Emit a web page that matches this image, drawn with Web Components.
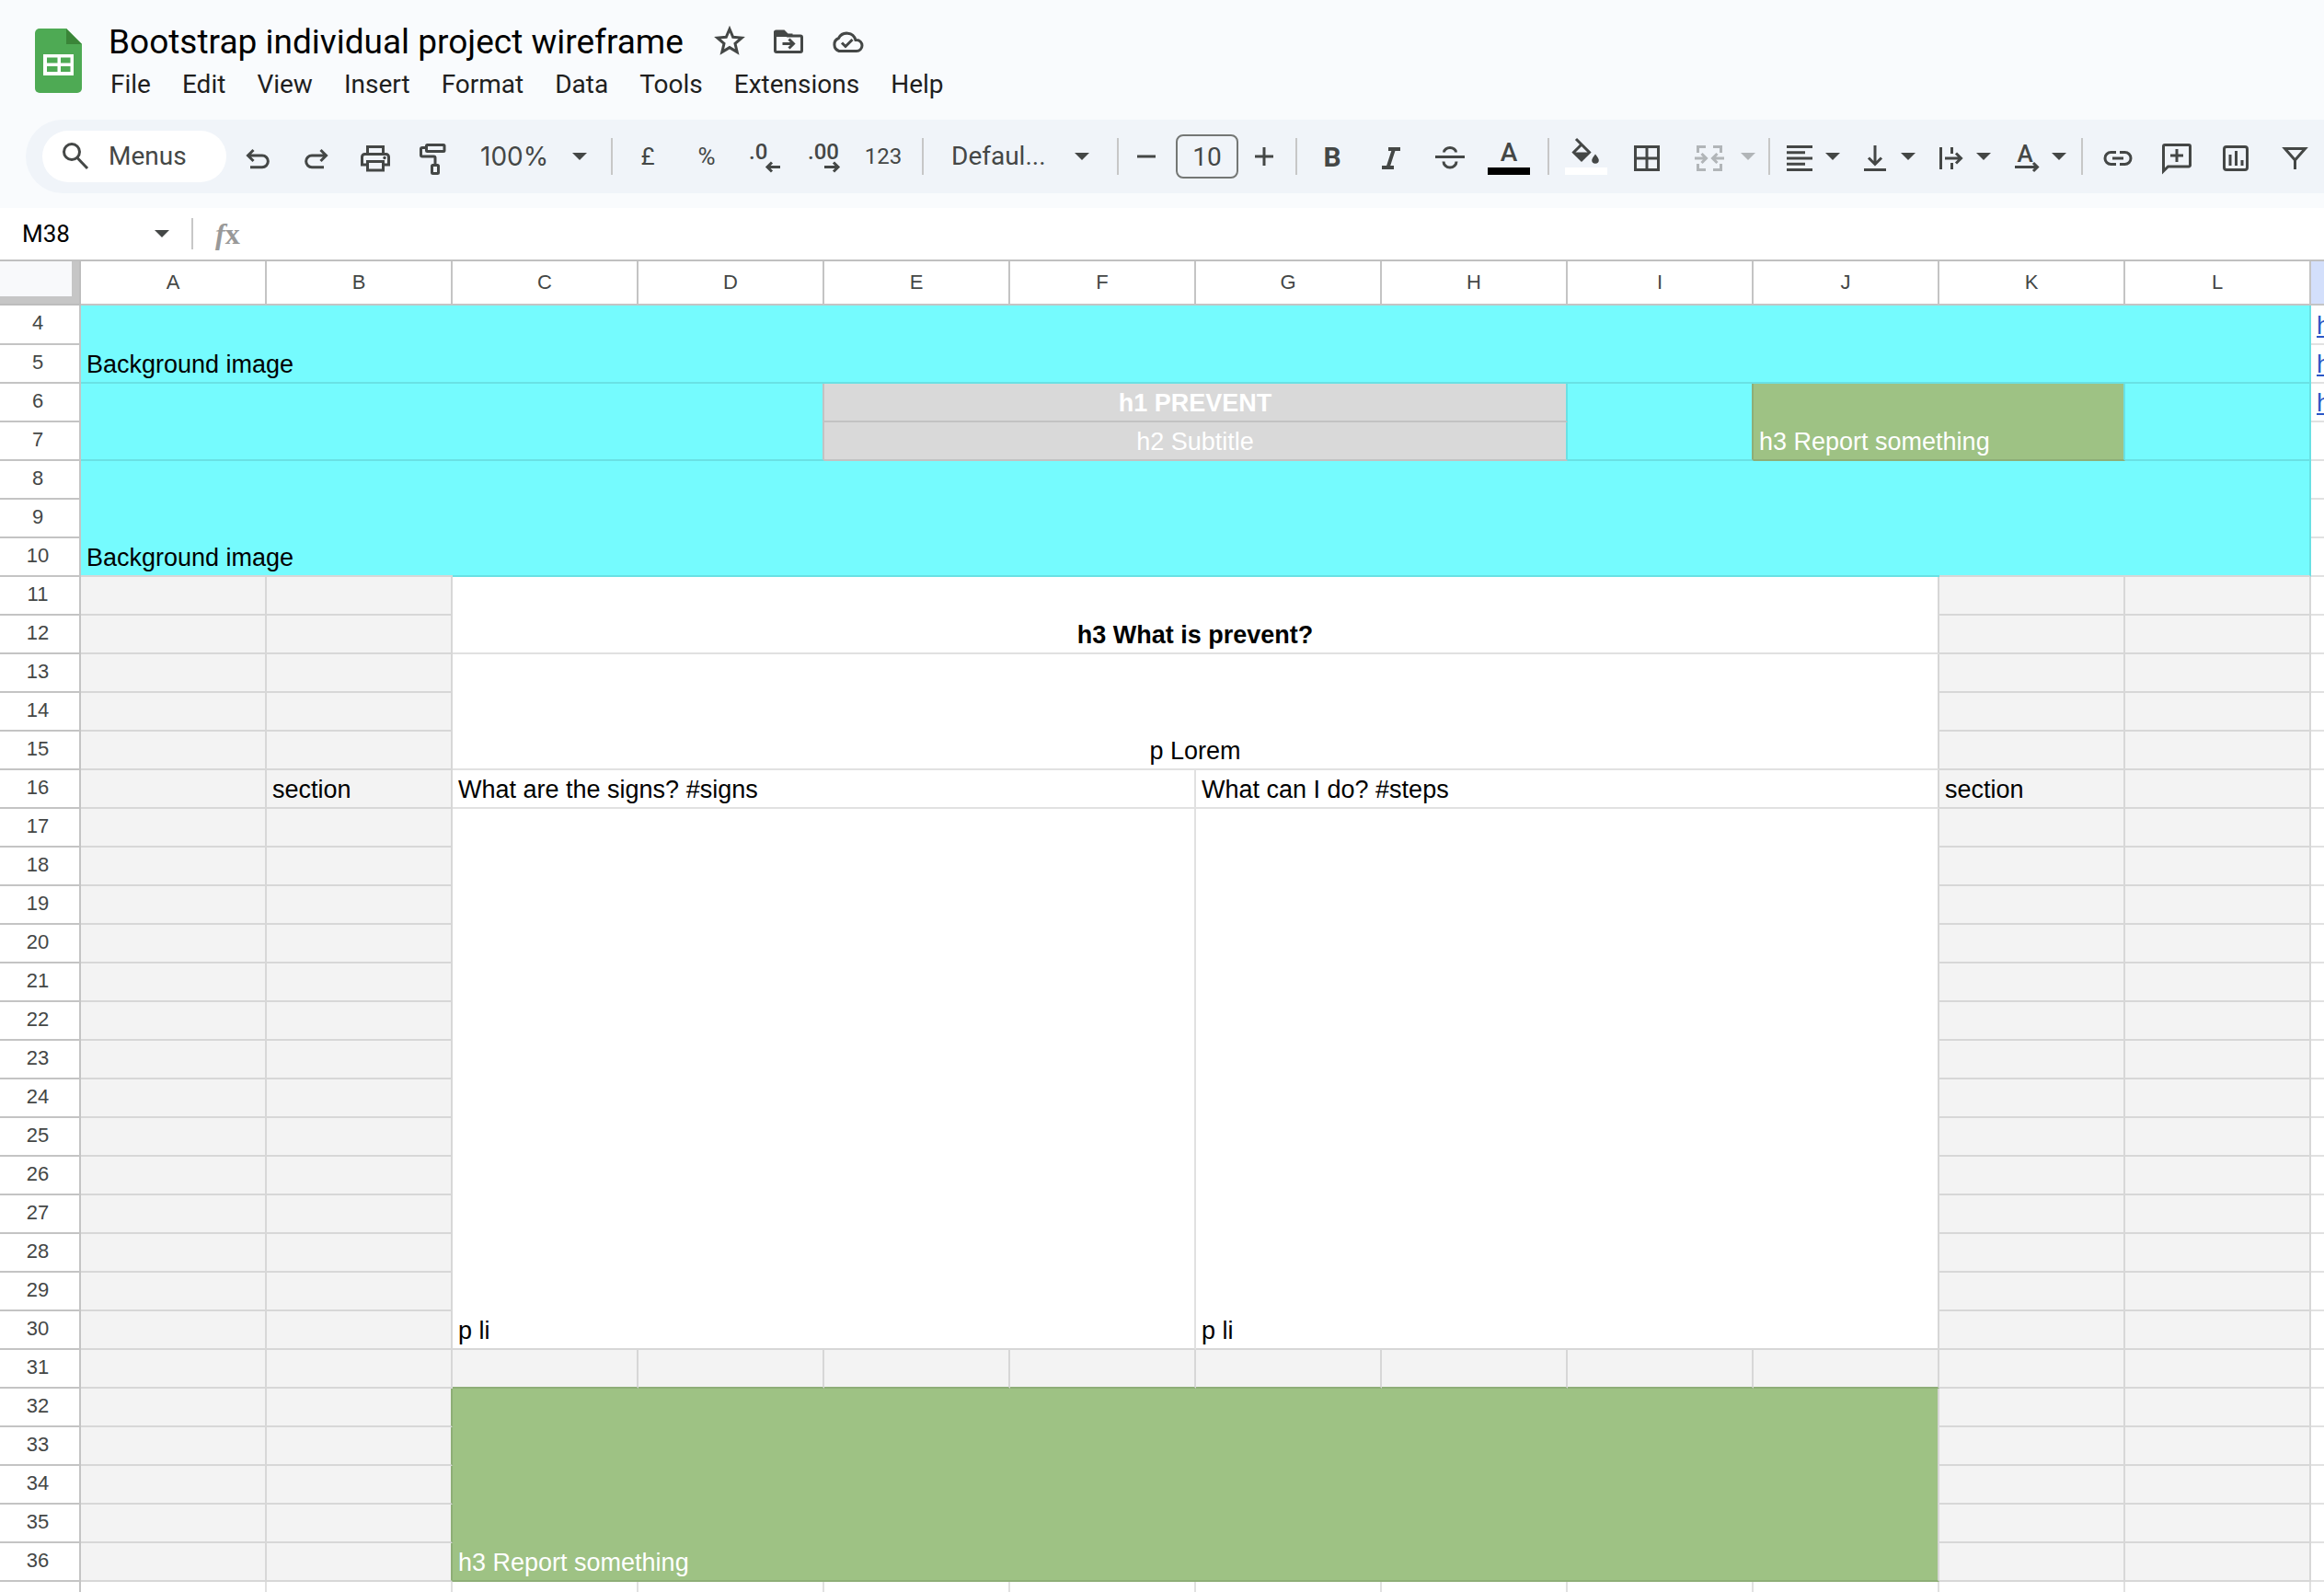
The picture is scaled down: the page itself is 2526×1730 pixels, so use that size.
<!DOCTYPE html>
<html lang="en">
<head>
<meta charset="utf-8">
<title>Bootstrap individual project wireframe</title>
<style>
  html, body { margin: 0; height: 100%; }
  body { font-family: Roboto, "Liberation Sans", sans-serif; color: #444746; background: #fff; overflow: hidden; }
</style>
</head>
<body>
<sheet-app></sheet-app>

<script>
const ICONS = {
  search: '<circle cx="16" cy="15" r="8.5"/><path d="M22 21.500L33 33"/>',
  undo: '<path d="M15.500 13L9.500 19l6 6M10 19h15a6.300 6.300 0 0 1 0 12.700H12"/>',
  redo: '<path d="M24.500 13l6 6-6 6M30 19H15a6.300 6.300 0 0 0 0 12.700h13"/>',
  print: '<path d="M11.500 17V9.500h17V17M11.500 29H5.500v-8.500a3 3 0 0 1 3-3h23a3 3 0 0 1 3 3V29h-6M11.500 25.500h17v9.500h-17z"/><circle cx="30" cy="21.500" r="1.700" class="f"/>',
  paint: '<rect x="11.500" y="7.500" width="19.500" height="7" rx="1"/><path d="M11 10.500H7a1.500 1.500 0 0 0-1.500 1.500v6.500A1.500 1.500 0 0 0 7 20h12.500a1.500 1.500 0 0 1 1.500 1.500V28"/><rect x="17.500" y="29.500" width="7" height="9" rx="1"/>',
  decLess: '<text x="2" y="23" class="m">.0</text><path d="M22 31.500h14M27 26.500l-5 5 5 5"/>',
  decMore: '<text x="2" y="23" class="m">.00</text><path d="M20 31.500h14M30 26.500l5 5-5 5"/>',
  minus: '<path d="M10 20h20"/>',
  plus: '<path d="M10 20h20M20 10v20"/>',
  italic: '<path d="M17 12h13M10 32h13M23 12l-6.500 20" stroke-width="4"/>',
  strike: '<path d="M4 20.500h32M13.500 15.500a6.500 5 0 0 1 13 0M13 25.500a7 6.500 0 0 0 14 0"/>',
  fill: '<path d="M11 1l6 6 8.500 8.500L17 24 8.500 15.500 17 7"/><path d="M7 15.500h20l-10 9.500z" class="f"/><path d="M32 17.500q3.800 4.800 3.800 6.500a3.800 3.800 0 0 1-7.600 0q0-1.700 3.800-6.500z" class="f"/><path d="M-1 32h46v8H-1z" fill="#fff" stroke="none"/>',
  borders: '<path d="M7.500 9.500h25v25h-25zM20 9v26M7 22h26"/>',
  merge: '<path d="M16 9.500H7.500V16M24 9.500h8.500V16M16 34.500H7.500V28M24 34.500h8.500V28M4 22h11M11.500 17l5 5-5 5M36 22H25M28.500 17l-5 5 5 5"/>',
  align: '<path d="M6 9.500h28M6 15.800h20M6 22h28M6 28.200h20M6 34.500h28"/>',
  valign: '<path d="M20 8v20M13 21.500l7 7 7-7M8 34.500h24"/>',
  wrap: '<path d="M9.500 10v24M21.500 10v7M21.500 27v7M14 22h17M26 16.500l5.500 5.500-5.500 5.500"/>',
  rotate: '<text x="19" y="26" text-anchor="middle" class="a">A</text><path d="M8 31.500h24M28 27l4.500 4.500L28 36"/>',
  link: '<path d="M18 15.500h-5.500a6.500 6.500 0 0 0 0 13H18M22 15.500h5.500a6.500 6.500 0 0 1 0 13H22M14 22h12"/>',
  comment: '<path d="M5.500 36V9a1.500 1.500 0 0 1 1.500-1.500h26A1.500 1.500 0 0 1 34.500 9v20.500a1.500 1.500 0 0 1-1.500 1.500H10.500zM20 12v14M13 19h14"/>',
  chart: '<rect x="7.500" y="9.500" width="25" height="25" rx="2.500"/><path d="M14 18v12M20.500 14v16M27 24v6"/>',
  filter: '<path d="M9.500 11.500h22L20.500 24zM20.500 22v12"/>',
  star: '<path d="M20 5.500l3.700 8.800 9.500.8-7.200 6.200 2.200 9.300-8.200-5-8.200 5 2.200-9.300-7.200-6.200 9.500-.8z"/>',
  folder: '<path d="M5.500 9.500h10l3.500 3.500h14a1.500 1.500 0 0 1 1.500 1.500v14.500a1.500 1.500 0 0 1-1.500 1.500h-26A1.500 1.500 0 0 1 5.500 29z"/><path d="M4 14V9a2.500 2.500 0 0 1 2.500-2.500h9l4 4h5V14z" class="f"/><path d="M13.500 21.500h11M20.500 16.500l5 5-5 5"/>',
  cloud: '<path d="M11 29.500a7.500 7.500 0 0 1-.500-14 10 10 0 0 1 18.500 2h1a6 6 0 0 1 0 12zM14 20.500l4 4 7.500-7.500"/>'
};

class SheetIcon extends HTMLElement {
  connectedCallback() {
    const root = this.attachShadow({ mode: 'open' });
    root.innerHTML = `<style>
      :host { display: block; flex: none; width: 40px; height: 40px; }
      svg { display: block; width: 40px; height: 40px; overflow: visible; fill: none; stroke: currentColor; stroke-width: 3; }
      .f { fill: currentColor; stroke: none; }
      text { fill: currentColor; stroke: none; font-family: Roboto, sans-serif; font-weight: 500; }
      .m { font-size: 24px; }
      .a { font-size: 26px; }
    </style><svg viewBox="0 0 40 40" aria-hidden="true">${ICONS[this.getAttribute('name')]}</svg>`;
  }
}
customElements.define('sheet-icon', SheetIcon);

class SheetCaret extends HTMLElement {
  connectedCallback() {
    this.attachShadow({ mode: 'open' }).innerHTML = `<style>
      :host { display: block; flex: none; width: 16px; height: 8px; pointer-events: none; }
      svg { display: block; fill: currentColor; }
    </style><svg width="16" height="8" viewBox="0 0 16 8" aria-hidden="true"><path d="M0 0h16L8 8z"/></svg>`;
  }
}
customElements.define('sheet-caret', SheetCaret);

class SheetRule extends HTMLElement {
  connectedCallback() {
    this.attachShadow({ mode: 'open' }).innerHTML = `<style>
      :host { display: block; flex: none; width: 2px; height: 40px; background: #c7c7c7; margin: 0 6px 0 10px; }
      :host([tight]) { margin-left: 4px; }
    </style>`;
  }
}
customElements.define('sheet-rule', SheetRule);

/* One toolbar button: an icon or short text, optionally with a drop-down caret. */
class ToolButton extends HTMLElement {
  connectedCallback() {
    const icon = this.getAttribute('icon');
    this.attachShadow({ mode: 'open' }).innerHTML = `<style>
      :host { display: block; flex: none; width: 64px; }
      button { all: unset; box-sizing: border-box; display: flex; width: 100%; height: 56px; align-items: center; justify-content: center;
        font: 400 26px/32px Roboto, sans-serif; color: #444746; cursor: pointer; }
      :host([narrow]) { width: 48px; }
      :host([wide]) { width: 72px; }
      :host([caret]) { width: 82px; }
      :host([caret]) button { justify-content: flex-start; gap: 8px; padding-left: 6px; }
      :host([disabled]) { width: 86px; }
      :host([disabled]) button { color: #b1b5b8; gap: 14px; padding-left: 12px; }
      ::slotted(small) { font-size: 24px; }
      ::slotted(b) { font-size: 30px; line-height: 36px; font-weight: 700; padding-top: 2px; }
      ::slotted(u) { text-decoration: none; font-size: 28px; font-weight: 500; line-height: 32px; border-bottom: 8px solid #000; width: 46px; text-align: center; }
    </style><button aria-label="${this.getAttribute('label')}" ${this.hasAttribute('disabled') ? 'disabled' : ''}>
      ${icon ? `<sheet-icon name="${icon}"></sheet-icon>` : '<slot></slot>'}
      ${this.hasAttribute('caret') ? '<sheet-caret></sheet-caret>' : ''}</button>`;
  }
}
customElements.define('tool-button', ToolButton);

class ToolSelect extends HTMLElement {
  connectedCallback() {
    this.attachShadow({ mode: 'open' }).innerHTML = `<style>
      :host { display: block; flex: none; }
      label { display: flex; align-items: center; height: 56px; }
      select { appearance: none; flex: 1; min-width: 0; border: 0; padding: 0; margin: 0; background: none; color: #444746; font: inherit; line-height: 36px; }
    </style><label><select aria-label="${this.getAttribute('label')}"><option>${this.getAttribute('value')}</option></select><sheet-caret></sheet-caret></label>`;
  }
}
customElements.define('tool-select', ToolSelect);

class SheetHeader extends HTMLElement {
  connectedCallback() {
    const menus = ['File', 'Edit', 'View', 'Insert', 'Format', 'Data', 'Tools', 'Extensions', 'Help'];
    this.attachShadow({ mode: 'open' }).innerHTML = `<style>
      :host { display: flex; align-items: flex-start; height: 130px; padding-left: 38px; box-sizing: border-box; }
      .logo { flex: none; width: 52px; height: 70px; margin-top: 31px; }
      .text { margin-left: 28px; padding-top: 21px; }
      .row { display: flex; height: 50px; align-items: center; color: #444746; }
      h1 { margin: 0 30px 0 0; font: 400 37px/50px Roboto, sans-serif; color: #000; white-space: nowrap; }
      .row button + button { margin-left: 24px; }
      button { all: unset; cursor: pointer; }
      nav { display: flex; gap: 34px; padding: 4px 0 0 2px; font-size: 28px; line-height: 34px; color: #1f1f1f; }
    </style>
    <svg class="logo" viewBox="0 0 52 70" aria-hidden="true">
      <path d="M5 0h29l17 17v48a5 5 0 0 1-5 5H5a5 5 0 0 1-5-5V5a5 5 0 0 1 5-5z" fill="#4eaa54"/>
      <path d="M34 0l17 17H34z" fill="#3a8538"/>
      <path fill="#fff" fill-rule="evenodd" d="M9 28h33v23H9zM13 31.500v6h11.500v-6zM28 31.500v6h10.500v-6zM13 41v6h11.500v-6zM28 41v6h10.500v-6z"/>
    </svg>
    <div class="text">
      <div class="row"><h1>Bootstrap individual project wireframe</h1>
        <button aria-label="Star"><sheet-icon name="star"></sheet-icon></button>
        <button aria-label="Move"><sheet-icon name="folder"></sheet-icon></button>
        <button aria-label="Document status"><sheet-icon name="cloud"></sheet-icon></button></div>
      <nav>${menus.map(m => `<button>${m}</button>`).join('')}</nav>
    </div>`;
  }
}
customElements.define('sheet-header', SheetHeader);

class SheetToolbar extends HTMLElement {
  connectedCallback() {
    this.attachShadow({ mode: 'open' }).innerHTML = `<style>
      :host { display: flex; align-items: center; height: 80px; margin-left: 28px; padding-left: 18px; box-sizing: border-box;
        background: #f0f4f9; border-radius: 40px 0 0 40px; overflow: hidden; font-size: 28px; }
      .menus { all: unset; box-sizing: border-box; flex: none; display: flex; align-items: center; gap: 16px; width: 200px; height: 56px; margin-right: 2px;
        padding-left: 16px; border-radius: 28px; background: #fff; line-height: 36px; cursor: pointer; }
      .zoom { width: 150px; padding: 0 16px 0 18px; box-sizing: border-box; font-family: Inter, sans-serif; }
      .font { width: 194px; padding: 0 20px 0 24px; box-sizing: border-box; }
      input { flex: none; box-sizing: border-box; width: 68px; height: 48px; margin: 0 4px 0 8px; padding: 0; border: 2px solid #747775; border-radius: 8px;
        background: none; color: #444746; font: 400 28px/44px Roboto, sans-serif; text-align: center; }
    </style>
    <button class="menus"><sheet-icon name="search"></sheet-icon>Menus</button>
    <tool-button icon="undo" label="Undo"></tool-button>
    <tool-button icon="redo" label="Redo"></tool-button>
    <tool-button icon="print" label="Print"></tool-button>
    <tool-button icon="paint" label="Paint format"></tool-button>
    <tool-select class="zoom" label="Zoom" value="100%"></tool-select>
    <sheet-rule></sheet-rule>
    <tool-button label="Format as currency">£</tool-button>
    <tool-button label="Format as per cent">%</tool-button>
    <tool-button icon="decLess" label="Decrease decimal places"></tool-button>
    <tool-button icon="decMore" label="Increase decimal places"></tool-button>
    <tool-button label="More formats"><small>123</small></tool-button>
    <sheet-rule></sheet-rule>
    <tool-select class="font" label="Font" value="Defaul..."></tool-select>
    <sheet-rule></sheet-rule>
    <tool-button narrow icon="minus" label="Decrease font size"></tool-button>
    <input aria-label="Font size" value="10">
    <tool-button narrow icon="plus" label="Increase font size"></tool-button>
    <sheet-rule></sheet-rule>
    <tool-button label="Bold"><b>B</b></tool-button>
    <tool-button icon="italic" label="Italic"></tool-button>
    <tool-button icon="strike" label="Strikethrough"></tool-button>
    <tool-button label="Text colour"><u>A</u></tool-button>
    <sheet-rule></sheet-rule>
    <tool-button icon="fill" label="Fill colour"></tool-button>
    <tool-button wide icon="borders" label="Borders"></tool-button>
    <tool-button caret disabled icon="merge" label="Merge cells"></tool-button>
    <sheet-rule></sheet-rule>
    <tool-button caret icon="align" label="Horizontal align"></tool-button>
    <tool-button caret icon="valign" label="Vertical align"></tool-button>
    <tool-button caret icon="wrap" label="Text wrapping"></tool-button>
    <tool-button caret icon="rotate" label="Text rotation"></tool-button>
    <sheet-rule tight></sheet-rule>
    <tool-button icon="link" label="Insert link"></tool-button>
    <tool-button icon="comment" label="Insert comment"></tool-button>
    <tool-button icon="chart" label="Insert chart"></tool-button>
    <tool-button icon="filter" label="Create a filter"></tool-button>`;
  }
}
customElements.define('sheet-toolbar', SheetToolbar);

class FormulaBar extends HTMLElement {
  connectedCallback() {
    this.attachShadow({ mode: 'open' }).innerHTML = `<style>
      :host { display: flex; align-items: center; height: 58px; box-sizing: border-box; border-bottom: 2px solid #c0c0c0; background: #fff; }
      input { border: 0; padding: 0; background: none; outline: 0; font: 400 26px/32px Roboto, sans-serif; color: #000; }
      .name { width: 144px; margin-left: 24px; }
      button { all: unset; display: flex; align-items: center; height: 32px; cursor: pointer; }
      sheet-rule { height: 34px; margin: 0 24px 0 24px; }
      .fx { flex: none; font: 700 32px/36px "Liberation Serif", serif; color: #999; }
      .formula { flex: 1; margin-left: 24px; }
    </style>
    <input class="name" aria-label="Name box" value="M38">
    <button aria-label="Named ranges"><sheet-caret></sheet-caret></button>
    <sheet-rule></sheet-rule>
    <span class="fx"><i>f</i>x</span>
    <input class="formula" aria-label="Formula">`;
  }
}
customElements.define('formula-bar', FormulaBar);

/* Merged ranges and filled cells, keyed by their top-left cell. */
const MERGES = {
  A4: { cols: 12, rows: 2, cls: 'cyan', text: 'Background image' },
  A6: { cols: 4, rows: 2, cls: 'cyan edge-grey' },
  E6: { cols: 4, rows: 1, cls: 'grey edge-cyan centre bold', text: 'h1 PREVENT' },
  I6: { cols: 1, rows: 2, cls: 'cyan edge-green' },
  J6: { cols: 2, rows: 2, cls: 'green edge-cyan', text: 'h3 Report something' },
  L6: { cols: 1, rows: 2, cls: 'cyan' },
  E7: { cols: 4, rows: 1, cls: 'grey edge-cyan centre', text: 'h2 Subtitle' },
  A8: { cols: 12, rows: 3, cls: 'cyan base-pale', text: 'Background image' },
  C11: { cols: 8, rows: 2, cls: 'edge-pale centre bold under-cyan', text: 'h3 What is prevent?' },
  C13: { cols: 8, rows: 3, cls: 'edge-pale centre', text: 'p Lorem' },
  C16: { cols: 4, rows: 1, cls: '', text: 'What are the signs? #signs' },
  G16: { cols: 4, rows: 1, cls: 'edge-pale', text: 'What can I do? #steps' },
  C17: { cols: 4, rows: 14, cls: 'base-pale', text: 'p li' },
  G17: { cols: 4, rows: 14, cls: 'edge-pale base-pale', text: 'p li' },
  C32: { cols: 8, rows: 5, cls: 'green edge-pale', text: 'h3 Report something' }
};
const TEXTS = { B16: 'section', K16: 'section' };
const LINKS = { M4: 'h', M5: 'h', M6: 'h' };

class SheetGrid extends HTMLElement {
  connectedCallback() {
    const letters = [...'ABCDEFGHIJKLM'];
    const covered = new Set();
    let body = '';
    for (let r = 4; r <= 37; r++) {
      body += `<tr><th scope="row">${r}</th>`;
      letters.forEach((c, i) => {
        const id = c + r;
        if (covered.has(id)) return;
        const m = MERGES[id];
        if (m) {
          for (let y = 0; y < m.rows; y++) for (let x = 0; x < m.cols; x++) covered.add(letters[i + x] + (r + y));
          body += `<td colspan="${m.cols}" rowspan="${m.rows}" class="${m.cls}">${m.text || ''}</td>`;
          return;
        }
        let cls = '';
        if (c !== 'M' && r < 37) {
          cls = 'pale';
          if (c === 'B' && r >= 32) cls += ' edge-green';
          if (r === 31 && i >= 2 && i <= 9) cls += ' base-green';
        }
        body += `<td class="${cls}">${LINKS[id] ? `<a href="#${id}">${LINKS[id]}</a>` : TEXTS[id] || ''}</td>`;
      });
      body += '</tr>';
    }
    this.attachShadow({ mode: 'open' }).innerHTML = `<style>
      :host { display: block; overflow: hidden; }
      table { table-layout: fixed; width: 2714px; border-collapse: separate; border-spacing: 0; font-family: "Liberation Sans", Arial, sans-serif; }
      col { width: 202px; }
      col.heads { width: 88px; }
      th, td { box-sizing: border-box; border: 0 solid var(--line); border-width: 0 2px 2px 0; --line: #e1e1e1; }
      th { --line: #c4c4c4; padding: 0; background: #fff; color: #444746; font-size: 22px; font-weight: 400; line-height: 26px; text-align: center; }
      thead tr { height: 48px; }
      tbody tr { height: 42px; }
      tbody tr:first-child { height: 43px; }
      tbody th { padding: 0 4px 3px 0; }
      thead td { padding: 0; background: #f8f9fb; box-shadow: inset -8px -8px #c6c6c6; --line: #bdbdbd; }
      thead th.current { background: #d3dffb; }
      tbody td { padding: 0 6px 4px; vertical-align: bottom; font-size: 27px; line-height: 30px; color: #000; background: #fff; white-space: nowrap; }
      tbody td.pale { background: #f3f3f3; --line: #d7d7d7; }
      tbody td.cyan { background: #75fbfe; --line: #69e1e4; }
      tbody td.grey { background: #d9d9d9; --line: #c2c2c2; color: #fff; }
      tbody td.green { background: #9ec284; --line: #8eae77; color: #fff; }
      tbody td.centre { text-align: center; }
      tbody td.bold { font-weight: 700; }
      tbody td.edge-grey { border-right-color: #c2c2c2; }
      tbody td.edge-cyan { border-right-color: #69e1e4; }
      tbody td.edge-green { border-right-color: #8eae77; }
      tbody td.edge-pale { border-right-color: #d7d7d7; }
      tbody td.base-pale { border-bottom-color: #d7d7d7; }
      tbody td.base-green { border-bottom-color: #8eae77; }
      tbody td.under-cyan { position: relative; box-shadow: 0 -2px #69e1e4; }
      a { color: #2a56c6; text-decoration: underline; text-decoration-thickness: 2px; text-underline-offset: 2px; }
    </style>
    <table>
      <colgroup><col class="heads">${letters.map(() => '<col>').join('')}</colgroup>
      <thead><tr><td></td>${letters.map(c => c === 'M' ? '<th scope="col" class="current" aria-label="M"></th>' : `<th scope="col">${c}</th>`).join('')}</tr></thead>
      <tbody>${body}</tbody>
    </table>`;
  }
}
customElements.define('sheet-grid', SheetGrid);

class SheetApp extends HTMLElement {
  connectedCallback() {
    this.attachShadow({ mode: 'open' }).innerHTML = `<style>
      :host { display: flex; flex-direction: column; height: 100vh; overflow: hidden; }
      header { flex: none; background: #f9fbfd; padding-bottom: 16px; }
      formula-bar { flex: none; }
      sheet-grid { flex: 1; min-height: 0; }
    </style>
    <header><sheet-header></sheet-header><sheet-toolbar></sheet-toolbar></header>
    <formula-bar></formula-bar>
    <sheet-grid></sheet-grid>`;
  }
}
customElements.define('sheet-app', SheetApp);
</script>
</body>
</html>
